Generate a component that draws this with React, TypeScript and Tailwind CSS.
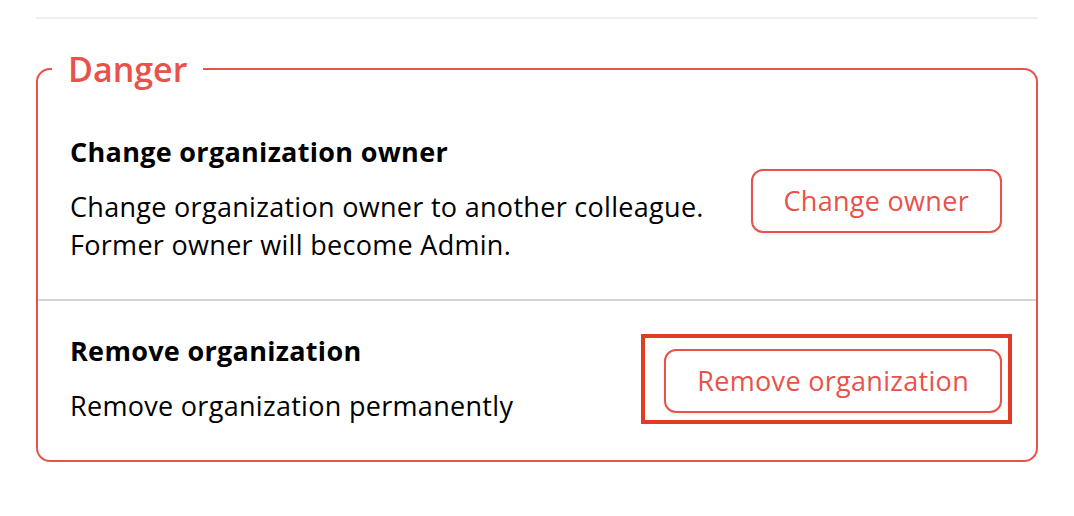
import React from "react";

export default function App() {
  return (
    <div
      className="w-[1074px] h-[516px] bg-white overflow-hidden"
      style={{ fontFamily: '"Open Sans", "Liberation Sans", sans-serif' }}
    >
      <div className="mx-[36px] pt-[17px]">
        <div className="h-[2px] bg-[#efefef]" />
        <fieldset className="mt-[30px] border-2 border-[#e8524a] rounded-[14px] pb-0">
          <legend className="ml-[14px] px-[16px] text-[34px] leading-[40px] font-semibold text-[#e8524a]">
            Danger
          </legend>
          <div className="flex items-center justify-between pl-[32px] pr-[34px] pt-[44px] pb-[35px] border-b-2 border-[#d4d4d4]">
            <div className="text-[27px] leading-[38px] tracking-[0.3px] text-black">
              <div className="font-bold mb-[17px]">Change organization owner</div>
              <div>Change organization owner to another colleague.</div>
              <div>Former owner will become Admin.</div>
            </div>
            <button className="mt-[4px] border-2 border-[#e8524a] rounded-[12px] px-[31px] py-[11px] text-[27px] leading-[38px] tracking-[0.3px] text-[#e8524a] bg-white shadow-[0_2px_3px_rgba(0,0,0,0.06)]">
              Change owner
            </button>
          </div>
          <div className="flex items-center justify-between pl-[32px] pr-[34px] pt-[31px] pb-[35px]">
            <div className="text-[27px] leading-[38px] tracking-[0.3px] text-black">
              <div className="font-bold mb-[17px]">Remove organization</div>
              <div>Remove organization permanently</div>
            </div>
            <div className="relative mt-[4px]">
              <button className="border-2 border-[#e8524a] rounded-[12px] px-[31px] py-[11px] text-[27px] leading-[38px] tracking-[0.3px] text-[#e8524a] bg-white shadow-[0_2px_3px_rgba(0,0,0,0.06)]">
                Remove organization
              </button>
              <div className="absolute left-[-23px] right-[-10px] top-[-15px] bottom-[-11px] border-[4px] border-[#e33a24] pointer-events-none" />
            </div>
          </div>
        </fieldset>
      </div>
    </div>
  );
}
